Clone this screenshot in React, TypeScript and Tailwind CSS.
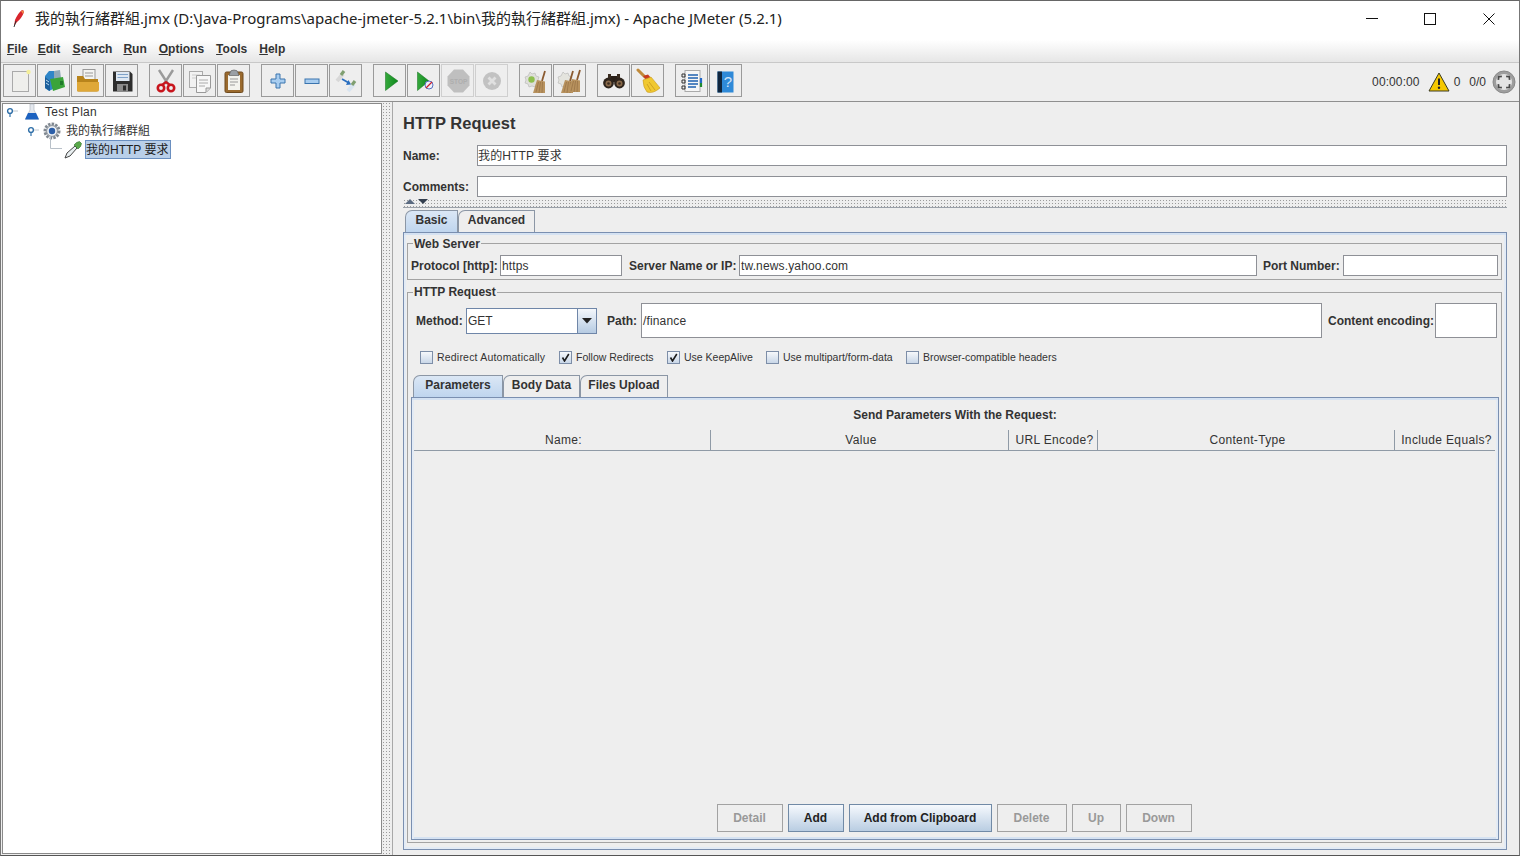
import React from "react";

const I = ({ children, s = 26 }: { children: React.ReactNode; s?: number }) => (
  <svg width={s} height={s} viewBox="0 0 26 26">{children}</svg>
);

const Broom = ({ x = 0, y = 0, c = "#b8925e" }: { x?: number; y?: number; c?: string }) => (
  <g transform={`translate(${x} ${y})`}>
    <path d="M19 2 L16 12" stroke="#8a5a30" strokeWidth="1.8" />
    <path d="M11 11 L19 12.5 L19 24 L7 24 Z" fill={c} />
    <path d="M10 23 L12.5 13 M13 24 L14.5 13 M16 24 L16.5 13" stroke="#8f6a40" strokeWidth="0.6" />
  </g>
);

const Icons: Record<string, React.ReactNode> = {
  new: (
    <I>
      <rect x="5.5" y="3.5" width="16" height="20" fill="#efefec" stroke="#aaaaaa" />
      <circle cx="21.5" cy="4" r="2.2" fill="#f4ef9a" />
    </I>
  ),
  templates: (
    <I>
      <path d="M4 8 L8 3 L14 3 L14 20 L8 23 L4 20 Z" fill="#2f86c8" />
      <path d="M13 3 L19 2 L20 10 L13 12 Z" fill="#8fa9b8" />
      <path d="M9 11 L22 9 L24 19 L12 23 Z" fill="#3aa43a" />
      <path d="M4 9 L9 13 L9 23 L4 20 Z" fill="#1c5f9c" />
      <path d="M5 12 L8 14 M5 15 L8 17" stroke="#bcdcf2" />
      <path d="M19 13 L22 13 L22 17 L19 17 Z" fill="#1f7a2a" />
    </I>
  ),
  open: (
    <I>
      <rect x="8" y="1.5" width="12" height="12" fill="#f4f4f2" stroke="#999" />
      <path d="M10 5h8M10 8h8" stroke="#999" />
      <path d="M2 8 h6 l2 3 h13 v11 a1.5 1.5 0 0 1 -1.5 1.5 h-18 a1.5 1.5 0 0 1 -1.5 -1.5 Z" fill="#b8841c" />
      <path d="M2 14 h22 v8 a1.5 1.5 0 0 1 -1.5 1.5 h-19 a1.5 1.5 0 0 1 -1.5 -1.5 Z" fill="#dfa838" />
    </I>
  ),
  save: (
    <I>
      <path d="M4 3.5 H21 L23.5 6 V23.5 H4 Z" fill="#2d2d2d" />
      <rect x="7" y="4" width="13.5" height="9" fill="#dfe8f2" />
      <path d="M8.5 6.5h10.5M8.5 9.5h10.5" stroke="#7fa2c8" />
      <rect x="8" y="16" width="11" height="7.5" fill="#8c8c8c" />
      <rect x="14" y="17.5" width="3" height="5" fill="#2d2d2d" />
    </I>
  ),
  cut: (
    <I>
      <path d="M6 2 L15 16 M20 2 L11 16" stroke="#9a9a9a" strokeWidth="2.4" />
      <circle cx="8" cy="20" r="3.2" fill="none" stroke="#c8151d" strokeWidth="2.6" />
      <circle cx="18" cy="20" r="3.2" fill="none" stroke="#c8151d" strokeWidth="2.6" />
      <path d="M9 17 L13 14 L17 17" stroke="#c8151d" strokeWidth="2.2" fill="none" />
    </I>
  ),
  copy: (
    <I>
      <rect x="2.5" y="3.5" width="13" height="16" fill="#f2f2f2" stroke="#aaa" />
      <path d="M5 7h8M5 10h8" stroke="#ccc" />
      <path d="M9.5 7.5 H23.5 V20 L19 24.5 H9.5 Z" fill="#f7f7f7" stroke="#999" />
      <path d="M12 12h9M12 15h9M12 18h6" stroke="#aaa" />
      <path d="M19 24 V20 H23" fill="#ddd" stroke="#999" />
    </I>
  ),
  paste: (
    <I>
      <rect x="4" y="4" width="18" height="20.5" rx="1.5" fill="#9a6a2e" stroke="#6e4a1e" />
      <rect x="7" y="7" width="12" height="15" fill="#f3f3ee" />
      <path d="M9 11h8M9 14h8M9 17h5" stroke="#999" />
      <path d="M9 5 Q9 2 13 2 Q17 2 17 5 L18 7.5 H8 Z" fill="#9aa0a6" stroke="#666" strokeWidth="0.7" />
    </I>
  ),
  plus: (
    <I>
      <path d="M11 6 h4 v5 h5 v4 h-5 v5 h-4 v-5 h-5 v-4 h5 Z" fill="#a8cdf0" stroke="#3a74ae" />
    </I>
  ),
  minus: (
    <I>
      <rect x="6" y="11" width="14" height="4.5" fill="#a8cdf0" stroke="#3a74ae" />
    </I>
  ),
  toggle: (
    <I>
      <path d="M4 13 L10 6" stroke="#d8d8d8" strokeWidth="4" />
      <path d="M8 7 L11 3" stroke="#7f9f70" strokeWidth="3.2" />
      <path d="M15 23 L21 16" stroke="#d8e4f0" strokeWidth="4" />
      <path d="M19 17 L22 13" stroke="#7f9f70" strokeWidth="3.2" />
      <path d="M9 11 L16 15" stroke="#2b6fc0" strokeWidth="1.8" />
      <path d="M13 17 L18 16.5 L15.5 12 Z" fill="#2b6fc0" />
    </I>
  ),
  run: (
    <I>
      <defs>
        <linearGradient id="gr" x1="0" y1="0" x2="1" y2="0">
          <stop offset="0" stopColor="#35a83c" />
          <stop offset="1" stopColor="#0d8a1c" />
        </linearGradient>
      </defs>
      <path d="M8.5 4 L21 13 L8.5 22.5 Z" fill="url(#gr)" stroke="#0e6e18" strokeWidth="0.5" />
    </I>
  ),
  runNo: (
    <I>
      <path d="M6.5 4 L18 13 L6.5 22.5 Z" fill="url(#gr)" stroke="#0e6e18" strokeWidth="0.5" />
      <circle cx="18" cy="17" r="4" fill="#eef2fa" stroke="#5a6fc0" strokeWidth="1" />
      <path d="M15 20 L21 14" stroke="#cc2030" strokeWidth="1.3" />
    </I>
  ),
  stop: (
    <I>
      <path d="M9 1.5 H18 L24.5 8.5 V17.5 L18 24.5 H9 L2.5 17.5 V8.5 Z" fill="#bfbfbf" />
      <text x="13.5" y="15.5" textAnchor="middle" fontSize="6.5" fontWeight="700" fill="#aeaeae" fontFamily="Liberation Sans">STOP</text>
    </I>
  ),
  shutdown: (
    <I>
      <circle cx="13" cy="13" r="9" fill="#c2c2c2" />
      <path d="M9.5 9.5 L16.5 16.5 M16.5 9.5 L9.5 16.5" stroke="#e0e0e0" strokeWidth="2.8" />
    </I>
  ),
  clear: (
    <I>
      <path d="M7 4 l2 2 l3 -1 l1 3 l3 1 l-1 3 l1 3 l-3 1 l-1 3 l-3 -1 l-3 1 l-1 -3 l-3 -1 l1 -3 l-1 -3 l3 -1 Z" fill="#dfdfda" stroke="#aaa" strokeWidth="0.5" />
      <circle cx="8.5" cy="11.5" r="3.2" fill="#8fc050" />
      <Broom x={3} y={1} />
    </I>
  ),
  clearAll: (
    <I>
      <path d="M6 4 l2 2 l3 -1 l1 3 l3 1 l-1 3 l1 3 l-3 1 l-1 3 l-3 -1 l-3 1 l-1 -3 l-3 -1 l1 -3 l-1 -3 l3 -1 Z" fill="#e4e4de" stroke="#aaa" strokeWidth="0.5" />
      <Broom x={-3} y={1} />
      <Broom x={4} y={0} />
    </I>
  ),
  find: (
    <I>
      <rect x="10" y="8" width="6" height="6" fill="#2a2018" />
      <path d="M7 6 h3 v5 h-3 Z M16 6 h3 v5 h-3 Z" fill="#3a2c20" />
      <circle cx="7.5" cy="15" r="5.4" fill="#2e241c" />
      <circle cx="18.5" cy="15" r="5.4" fill="#2e241c" />
      <circle cx="7.5" cy="15.5" r="3" fill="#8a6a4a" />
      <circle cx="18.5" cy="15.5" r="3" fill="#8a6a4a" />
      <circle cx="7.5" cy="15.5" r="1.3" fill="#3a2c20" />
      <circle cx="18.5" cy="15.5" r="1.3" fill="#3a2c20" />
    </I>
  ),
  broom: (
    <I>
      <path d="M3 2 L10 9" stroke="#c08a3a" strokeWidth="3" strokeLinecap="round" />
      <path d="M8 8 L13 6.5 L16 10 L12 13 Z" fill="#c83a20" />
      <path d="M8 12 L16 9 Q21 15 25 20 Q18 26 12 24 Q8 19 8 12 Z" fill="#f0c830" stroke="#c89820" strokeWidth="0.6" />
      <path d="M14 14 L20 22 M12 16 L16 23" stroke="#c89820" strokeWidth="0.8" />
    </I>
  ),
  functions: (
    <I>
      <rect x="6" y="2.5" width="15" height="21" fill="#f6f6f6" stroke="#aaa" />
      <path d="M3 6h3v3h-3Z M3 12h3v3h-3Z M3 18h3v3h-3Z" fill="none" stroke="#333" />
      <path d="M9 7h10M9 10h10M9 13h10M9 16h10M9 19h8" stroke="#1f62b0" strokeWidth="1.3" />
      <path d="M22 10v5" stroke="#2468c8" strokeWidth="2.2" />
      <path d="M22 15v4" stroke="#1e8a30" strokeWidth="2.2" />
    </I>
  ),
  help: (
    <I>
      <rect x="4.5" y="3.5" width="16" height="21" fill="#2f8ad8" />
      <rect x="4.5" y="3.5" width="4.5" height="21" fill="#10263e" />
      <text x="15" y="19" textAnchor="middle" fontSize="15" fill="#cfe4f8" fontFamily="Liberation Sans">?</text>
    </I>
  ),
};

const Tool = ({ n, off }: { n: string; off?: boolean }) => (
  <button
    className={`flex h-[33px] w-[33px] shrink-0 items-center justify-center border bg-[#eeeeee] ${
      off ? "border-[#cfcfcf]" : "border-[#9a9a9a]"
    }`}
  >
    {Icons[n]}
  </button>
);

const ToolGroup = ({ children }: { children: React.ReactNode }) => (
  <div className="flex gap-[1px]">{children}</div>
);

const Menu = ({ u, r, c = "" }: { u: string; r: string; c?: string }) => (
  <span className={`text-xs font-bold text-[#333333] ${c}`}>
    <span className="underline">{u}</span>
    {r}
  </span>
);

const Handle = () => (
  <svg width="18" height="10" viewBox="0 0 18 10" className="shrink-0">
    <circle cx="5" cy="4" r="2.4" fill="#fff" stroke="#2f6fa8" strokeWidth="1.4" />
    <path d="M5 6.5 V10" stroke="#2f6fa8" strokeWidth="1.2" />
    <path d="M8 4 H13" stroke="#c0c8d0" />
  </svg>
);

const Field = ({ w, h = "h-[21px]", v, c = "pl-[1px]" }: { w: string; h?: string; v?: string; c?: string }) => (
  <div className={`${w} ${h} ${c} flex shrink-0 items-center overflow-hidden border border-[#8e9096] bg-white text-xs tracking-[0.15px] text-[#333333]`}>
    {v}
  </div>
);

const Lbl = ({ w, t }: { w: string; t: string }) => (
  <span className={`${w} shrink-0 whitespace-nowrap text-xs font-bold text-[#333333]`}>{t}</span>
);

const Check = ({ w, t, on, c = "" }: { w: string; t: string; on?: boolean; c?: string }) => (
  <div className={`${w} flex shrink-0 items-center gap-[4px]`}>
    <div className="flex h-[13px] w-[13px] shrink-0 items-center justify-center border border-[#7d8ea8] bg-gradient-to-b from-[#f6f8fb] to-[#c9d7e8]">
      {on && (
        <svg width="9" height="9" viewBox="0 0 9 9">
          <path d="M1.5 4.5 L3.5 8 L7.8 1" fill="none" stroke="#1c1c1c" strokeWidth="1.6" />
        </svg>
      )}
    </div>
    <span className={`whitespace-nowrap text-[10.5px] text-[#333333] ${c}`}>{t}</span>
  </div>
);

const Tab = ({ t, w, on }: { t: string; w: string; on?: boolean }) => (
  <div
    className={`${w} flex h-full items-center justify-center rounded-tl-[7px] border-x border-t border-[#8b96a5] pb-[3px] text-xs font-bold text-[#333333] ${
      on ? "bg-gradient-to-b from-[#dbe7f5] to-[#bfd5ee]" : "bg-[#eeeeee]"
    }`}
  >
    {t}
  </div>
);

const Btn = ({ t, w, on }: { t: string; w: string; on?: boolean }) => (
  <div
    className={`${w} flex h-[28px] items-center justify-center border text-xs font-bold ${
      on
        ? "border-[#718aa6] bg-gradient-to-b from-[#f6f9fd] to-[#b9cde2] text-[#222222]"
        : "border-[#a2a2a2] bg-[#eeeeee] text-[#999999]"
    }`}
  >
    {t}
  </div>
);

const Th = ({ t, w, last }: { t: string; w: string; last?: boolean }) => (
  <div className={`${w} flex items-center justify-center border-b border-[#8f9aa6] pl-[3px] text-xs tracking-[0.35px] text-[#333333] ${last ? "" : "border-r"}`}>
    {t}
  </div>
);

const Legend = ({ t, c = "leading-[14px]" }: { t: string; c?: string }) => (
  <legend className={`ml-[5px] h-[14px] px-[1px] text-xs font-bold text-[#333333] ${c}`}>{t}</legend>
);

const dots = "bg-[radial-gradient(#9a9a9a_0.6px,transparent_0.8px)] bg-[length:3px_3px]";

export default function App() {
  return (
    <div className="flex h-[856px] w-[1520px] flex-col overflow-hidden border-x border-y border-x-[#777777] border-t-[#666666] border-b-[#555555] bg-[#eeeeee] font-['Liberation_Sans','Noto_Sans_CJK_TC',sans-serif] text-[#333333]">
      {/* title bar */}
      <div className="flex h-[39px] shrink-0 items-center bg-white pb-[4px] pl-[10px]">
        <svg width="17" height="19" viewBox="0 0 17 19" className="shrink-0">
          <path d="M3 17 L4 11 Q7 4 11 1 Q13 1 13 3 Q11 9 6 13 Z" fill="#d8242c" />
          <path d="M3 18 L5 12" stroke="#333" strokeWidth="1" />
          <path d="M10 2 Q12 1 13 2.5 L12 5 Z" fill="#f08a4a" />
        </svg>
        <span className="ml-[7px] whitespace-nowrap font-['Noto_Sans','Noto_Sans_CJK_TC',sans-serif] text-[15px] text-[#222222]">
          我的執行緒群組.jmx (D:\Java-Programs\apache-jmeter-5.2.1\bin\我的執行緒群組.jmx) - Apache JMeter (5.2.1)
        </span>
        <div className="ml-auto flex items-center pr-[24px]">
          <svg width="12" height="12" viewBox="0 0 12 12">
            <path d="M0 5.5 H12" stroke="#111" />
          </svg>
          <svg width="12" height="12" viewBox="0 0 12 12" className="ml-[46px]">
            <rect x="0.5" y="0.5" width="11" height="11" fill="none" stroke="#111" />
          </svg>
          <svg width="12" height="12" viewBox="0 0 12 12" className="ml-[47px]">
            <path d="M0.5 0.5 L11.5 11.5 M11.5 0.5 L0.5 11.5" stroke="#111" />
          </svg>
        </div>
      </div>
      {/* menu */}
      <div className="flex h-[22px] shrink-0 items-start gap-[12px] bg-gradient-to-b from-white to-[#e6e6e6] pl-[6px] pt-[1px]">
        <Menu u="F" r="ile" c="-mr-[2px]" />
        <Menu u="E" r="dit" />
        <Menu u="S" r="earch" c="-mr-[1px]" />
        <Menu u="R" r="un" />
        <Menu u="O" r="ptions" />
        <Menu u="T" r="ools" />
        <Menu u="H" r="elp" />
      </div>
      {/* toolbar */}
      <div className="flex h-[40px] shrink-0 items-center border-y border-y-[#c8c8c8] border-b-[#8f8f8f] bg-[#eeeeee] pb-[3px] pl-[2px] pr-[3px]">
        <div className="flex gap-[11px]">
          <ToolGroup><Tool n="new" /><Tool n="templates" /><Tool n="open" /><Tool n="save" /></ToolGroup>
          <ToolGroup><Tool n="cut" /><Tool n="copy" /><Tool n="paste" /></ToolGroup>
          <ToolGroup><Tool n="plus" /><Tool n="minus" /><Tool n="toggle" /></ToolGroup>
          <ToolGroup><Tool n="run" /><Tool n="runNo" /><Tool n="stop" off /><Tool n="shutdown" off /></ToolGroup>
          <ToolGroup><Tool n="clear" /><Tool n="clearAll" /></ToolGroup>
          <ToolGroup><Tool n="find" /><Tool n="broom" /></ToolGroup>
          <ToolGroup><Tool n="functions" /><Tool n="help" /></ToolGroup>
        </div>
        <div className="ml-auto mt-[3px] flex items-center text-xs text-[#333333]">
          <span className="tracking-[0.1px]">00:00:00</span>
          <svg width="22" height="20" viewBox="0 0 22 20" className="ml-[8px]">
            <path d="M11 1 L21 19 H1 Z" fill="#f5c800" stroke="#3a3a20" strokeWidth="1" />
            <path d="M11 6.5 V13" stroke="#222" strokeWidth="2" />
            <circle cx="11" cy="15.8" r="1.2" fill="#222" />
          </svg>
          <span className="ml-[4px]">0</span>
          <span className="ml-[9px]">0/0</span>
          <svg width="24" height="24" viewBox="0 0 24 24" className="ml-[6px]">
            <circle cx="12" cy="12" r="11" fill="#9e9e9e" stroke="#8a8a8a" />
            <circle cx="12" cy="12" r="8" fill="#e4e4e4" />
            <path d="M9.5 6.5 L12 4.5 L14.5 6.5 M9.5 17.5 L12 19.5 L14.5 17.5 M6.5 9.5 L4.5 12 L6.5 14.5 M17.5 9.5 L19.5 12 L17.5 14.5" fill="none" stroke="#4a4a4a" strokeWidth="1.8" transform="rotate(45 12 12)" />
          </svg>
        </div>
      </div>
      {/* main */}
      <div className="flex min-h-0 flex-1">
        {/* tree */}
        <div className="mb-[1px] ml-[1px] mt-[1px] flex w-[380px] shrink-0 flex-col border border-[#8a8a8a] bg-white pl-[2px] text-xs text-[#333333]">
          <div className="-mt-[2px] flex h-[19px] items-center">
            <Handle />
            <svg width="18" height="18" viewBox="0 0 18 18" className="shrink-0">
              <path d="M7 1 H11 V7 L15.5 16 H2.5 L7 7 Z" fill="#e4e8ee" stroke="#a8b0b8" strokeWidth="0.6" />
              <path d="M5 10 H13 L16 16.5 H2 Z" fill="#1c62c0" />
            </svg>
            <span className="ml-[4px] tracking-[0.3px]">Test Plan</span>
          </div>
          <div className="flex h-[19px] items-center pl-[21px]">
            <Handle />
            <svg width="20" height="20" viewBox="0 0 20 20" className="-ml-[2px] shrink-0">
              <circle cx="10" cy="10" r="7" fill="#dfe3e8" stroke="#808890" strokeWidth="3" strokeDasharray="2.4 1.2" />
              <circle cx="10" cy="10" r="5.4" fill="#eef1f4" stroke="#8a929a" />
              <circle cx="10" cy="10" r="3.2" fill="#2c5fa8" />
            </svg>
            <span className="ml-[4px]">我的執行緒群組</span>
          </div>
          <div className="flex h-[19px] items-center pl-[45px]">
            <svg width="14" height="19" viewBox="0 0 14 19" className="-mt-[8px] shrink-0">
              <path d="M0.5 0 V12.5 H12" fill="none" stroke="#b8c0c8" />
            </svg>
            <svg width="20" height="20" viewBox="0 0 20 20" className="-ml-[1px] shrink-0">
              <path d="M2 18 L4 13 L12 6 L14 8 L7 16 Z" fill="#e8eef0" stroke="#444" strokeWidth="1" />
              <path d="M11 5 L15 9 L17.5 6.5 L18.5 3.5 L16.5 1.5 L13.5 2.5 Z" fill="#5aa84a" stroke="#2e6e2a" strokeWidth="0.6" />
            </svg>
            <span className="ml-[2px] flex h-[19px] w-[86px] items-center border border-[#6a8fc0] bg-[#b9cfe9] text-[#222222]">我的HTTP 要求</span>
          </div>
        </div>
        {/* splitter */}
        <div className={`w-[10px] shrink-0 ${dots}`} />
        {/* right */}
        <div className="flex min-w-0 flex-1 flex-col border-l border-[#a8a8a8] pl-[10px] pr-[12px]">
          <div className="flex h-[43px] shrink-0 items-start pt-[12px] text-[16.5px] font-bold leading-[19px] text-[#333333]">HTTP Request</div>
          <div className="flex h-[21px] shrink-0 items-center">
            <Lbl w="w-[74px]" t="Name:" />
            <Field w="flex-1" v="我的HTTP 要求" c="pl-0" />
          </div>
          <div className="mt-[10px] flex h-[21px] shrink-0 items-center">
            <Lbl w="w-[74px]" t="Comments:" />
            <Field w="flex-1" />
          </div>
          <div className={`relative mt-[2px] h-[9px] shrink-0 border-b border-[#9aa0a8] ${dots}`}>
            <svg width="24" height="6" viewBox="0 0 24 6" className="absolute left-[2px] top-0">
              <path d="M0 5 L5 0 L10 5 Z" fill="#5a6a80" />
              <path d="M13 0 H23 L18 5 Z" fill="#333e4e" />
            </svg>
          </div>
          <div className="mt-[2px] flex h-[22px] shrink-0 pl-[2px]">
            <Tab t="Basic" w="w-[53px]" on />
            <Tab t="Advanced" w="w-[77px]" />
          </div>
          {/* tab pane */}
          <div className="mb-[5px] min-h-0 flex-1 border border-[#7a8fb0] pl-[3px] pr-[4px] pt-[3px] shadow-[inset_0_2px_0_#d5e2f2,inset_2px_0_0_#e3ebf5,inset_-2px_0_0_#e3ebf5,inset_0_-2px_0_#e3ebf5]">
            <fieldset className="h-[44px] border border-[#a3a3a3]">
              <Legend t="Web Server" c="leading-[16px]" />
              <div className="flex h-[21px] items-center pl-[3px] [margin-top:5px]">
                <Lbl w="w-[89px]" t="Protocol [http]:" />
                <Field w="w-[122px]" v="https" />
                <div className="w-[7px]" />
                <Lbl w="w-[110px]" t="Server Name or IP:" />
                <Field w="w-[518px]" v="tw.news.yahoo.com" />
                <div className="w-[6px]" />
                <Lbl w="w-[80px]" t="Port Number:" />
                <Field w="w-[155px]" />
              </div>
            </fieldset>
            <fieldset className="mt-[5px] h-[558px] border border-[#a3a3a3]">
              <Legend t="HTTP Request" />
              <div className="flex h-[543px] flex-col pb-[2px] pl-[3px] pr-[2px] pt-[4px]">
                <div className="flex h-[35px] shrink-0 items-center pl-[5px]">
                  <Lbl w="w-[50px]" t="Method:" />
                  <div className="flex h-[26px] w-[131px] shrink-0 border border-[#6f86a8] bg-white">
                    <span className="flex flex-1 items-center pl-[1px] text-xs text-[#333333]">GET</span>
                    <div className="flex w-[19px] items-center justify-center border-l border-[#6f86a8] bg-gradient-to-b from-[#f4f7fb] to-[#b6cbe2]">
                      <svg width="10" height="6" viewBox="0 0 10 6">
                        <path d="M0 0 H10 L5 5.5 Z" fill="#222" />
                      </svg>
                    </div>
                  </div>
                  <div className="w-[10px]" />
                  <Lbl w="w-[34px]" t="Path:" />
                  <Field w="w-[681px]" h="h-[35px]" v="/finance" />
                  <div className="w-[6px]" />
                  <Lbl w="w-[107px]" t="Content encoding:" />
                  <Field w="w-[62px]" h="h-[35px]" />
                </div>
                <div className="mt-[12px] flex h-[15px] shrink-0 items-center pl-[9px]">
                  <Check w="w-[139px]" t="Redirect Automatically" c="tracking-[0.2px]" />
                  <Check w="w-[108px]" t="Follow Redirects" on />
                  <Check w="w-[99px]" t="Use KeepAlive" on />
                  <Check w="w-[140px]" t="Use multipart/form-data" />
                  <Check w="w-[150px]" t="Browser-compatible headers" />
                </div>
                <div className="mt-[10px] flex h-[22px] shrink-0 pl-[2px]">
                  <Tab t="Parameters" w="w-[90px]" on />
                  <Tab t="Body Data" w="w-[77px]" />
                  <Tab t="Files Upload" w="w-[88px]" />
                </div>
                <div className="flex min-h-0 flex-1 flex-col border border-[#7a8fb0] px-[2px] shadow-[inset_0_2px_0_#d5e2f2,inset_2px_0_0_#e3ebf5,inset_-2px_0_0_#e3ebf5,inset_0_-2px_0_#d5e2f2]">
                  <div className="flex h-[32px] shrink-0 items-end justify-center pb-[8px] text-xs font-bold leading-[14px] text-[#333333]">Send Parameters With the Request:</div>
                  <div className="flex h-[21px] shrink-0 pr-[1px]">
                    <Th t="Name:" w="w-[297px]" />
                    <Th t="Value" w="w-[298px]" />
                    <Th t="URL Encode?" w="w-[89px]" />
                    <Th t="Content-Type" w="w-[297px]" />
                    <Th t="Include Equals?" w="flex-1" last />
                  </div>
                  <div className="mb-[7px] mr-[2px] mt-auto flex shrink-0 justify-center gap-[5px]">
                    <Btn t="Detail" w="w-[66px]" />
                    <Btn t="Add" w="w-[56px]" on />
                    <Btn t="Add from Clipboard" w="w-[143px]" on />
                    <Btn t="Delete" w="w-[70px]" />
                    <Btn t="Up" w="w-[49px]" />
                    <Btn t="Down" w="w-[66px]" />
                  </div>
                </div>
              </div>
            </fieldset>
          </div>
        </div>
      </div>
    </div>
  );
}
